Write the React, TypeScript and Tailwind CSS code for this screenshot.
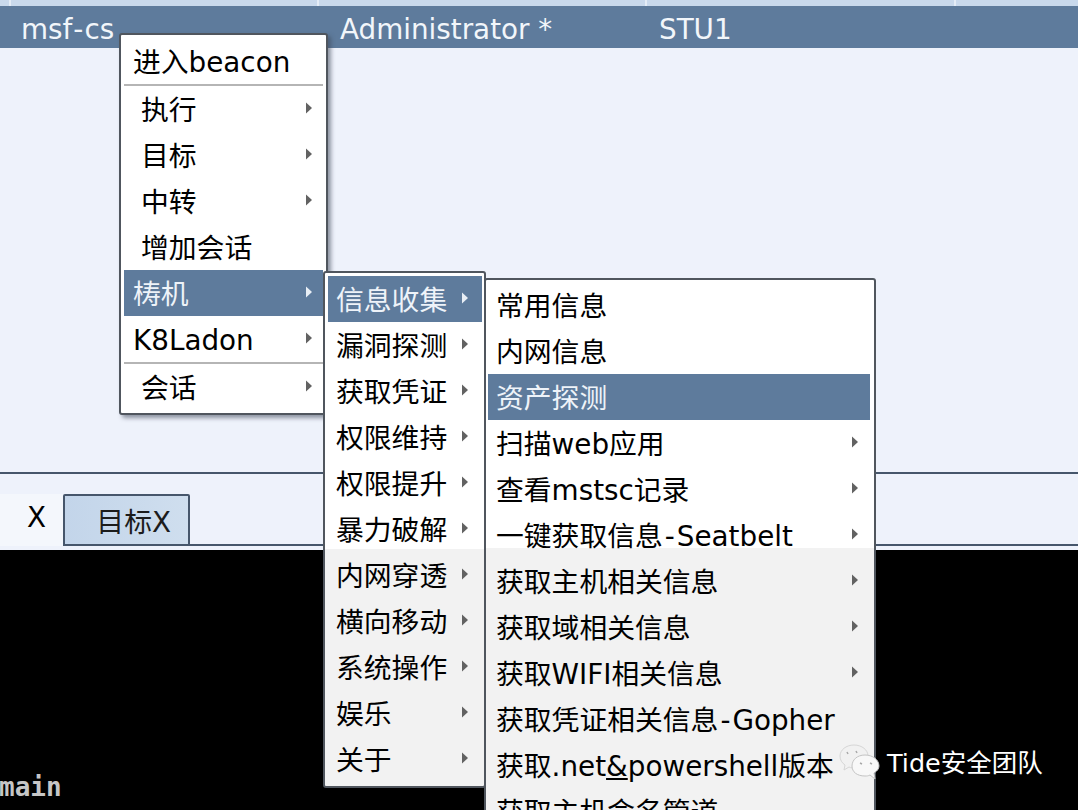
import React from 'react';

type Item = { label: React.ReactNode; arrow?: boolean; active?: boolean; indent?: boolean; sep?: boolean };

const Dash = () => <span className="px-[2px]">-</span>;

const firstMenu: Item[] = [
  { label: '进入beacon', sep: true },
  { label: '执行', arrow: true, indent: true },
  { label: '目标', arrow: true, indent: true },
  { label: '中转', arrow: true, indent: true },
  { label: '增加会话', indent: true },
  { label: '梼机', arrow: true, active: true },
  { label: 'K8Ladon', arrow: true, sep: true },
  { label: '会话', arrow: true, indent: true },
];

const secondMenu: Item[] = [
  { label: '信息收集', arrow: true, active: true },
  { label: '漏洞探测', arrow: true },
  { label: '获取凭证', arrow: true },
  { label: '权限维持', arrow: true },
  { label: '权限提升', arrow: true },
  { label: '暴力破解', arrow: true },
  { label: '内网穿透', arrow: true },
  { label: '横向移动', arrow: true },
  { label: '系统操作', arrow: true },
  { label: '娱乐', arrow: true },
  { label: '关于', arrow: true },
];

const thirdMenu: Item[] = [
  { label: '常用信息' },
  { label: '内网信息' },
  { label: '资产探测', active: true },
  { label: '扫描web应用', arrow: true },
  { label: '查看mstsc记录', arrow: true },
  { label: <>一键获取信息<Dash />Seatbelt</>, arrow: true },
  { label: '获取主机相关信息', arrow: true },
  { label: '获取域相关信息', arrow: true },
  { label: '获取WIFI相关信息', arrow: true },
  { label: <>获取凭证相关信息<Dash />Gopher</> },
  { label: <>获取.net<span className="underline">&amp;</span>powershell版本</> },
  { label: '获取主机命名管道' },
];

const Arrow = ({ active }: { active?: boolean }) => (
  <svg width="6" height="12" viewBox="0 0 6 12" className="mb-[6px] shrink-0">
    <path d="M0 0.5 L6 6 L0 11.5 Z" fill={active ? '#e8eef5' : '#626262'} />
  </svg>
);

const MenuRow = ({ item, pad }: { item: Item; pad: string }) => (
  <>
    <div
      className={`flex h-[46px] shrink-0 items-center justify-between whitespace-nowrap pt-[4px] ${pad} ${
        item.active ? 'bg-[#5e7b9c] text-[#eef3f9]' : 'text-black'
      }`}
    >
      <span className={item.indent ? 'pl-2' : ''}>{item.label}</span>
      {item.arrow && <Arrow active={item.active} />}
    </div>
    {item.sep && <div className="h-[2px] shrink-0 bg-[#b5b5b5]" />}
  </>
);

export default function App() {
  return (
    <div className="relative flex h-[810px] w-[1078px] flex-col overflow-hidden bg-[#eef2fb] font-['DejaVu_Sans','Noto_Sans_CJK_SC',sans-serif] text-[27.8px] leading-none">
      {/* table header, only its lower edge is visible */}
      <div className="flex h-[6px] shrink-0 bg-[#c9d9ec]">
        <div className="w-[11px] border-r-2 border-[#e4ecf6]" />
        <div className="w-[308px] border-r-2 border-[#e4ecf6]" />
        <div className="w-[328px] border-r-2 border-[#e4ecf6]" />
        <div className="w-[309px] border-r-2 border-[#e4ecf6]" />
      </div>

      {/* selected row */}
      <div className="flex h-[42px] shrink-0 items-center bg-[#5e7b9c] pt-[6px] text-[#f2f6fa]">
        <div className="w-[340px] pl-[21px]">
          msf<span className="px-[1px]">-</span>cs
        </div>
        <div className="w-[319px]">Administrator *</div>
        <div>STU1</div>
      </div>

      <div className="h-[426px] shrink-0 border-b-2 border-[#46566b]" />

      {/* tabs */}
      <div className="flex h-[72px] shrink-0 items-end border-b-2 border-[#46566b]">
        <div className="-mb-[2px] flex h-[52px] w-[63px] items-center justify-end bg-[#f4f7fc] pr-[17px] pb-[5px] text-black">X</div>
        <div className="-mb-[2px] flex h-[52px] w-[127px] items-center justify-end rounded-t-[2px] border-2 border-[#46566b] bg-gradient-to-r from-[#c3d5ea] to-[#cfdeee] pr-[17px] pt-[5px] text-[#1c1c1c]">目标X</div>
      </div>
      <div className="h-[4px] shrink-0" />

      {/* console */}
      <div className="flex flex-1 items-end bg-black pb-[10px]">
        <span className="-ml-[1px] font-['DejaVu_Sans_Mono',monospace] text-[26px] font-bold text-[#c6c6c6]">main</span>
      </div>

      {/* context menus */}
      <div className="absolute left-[119px] top-[33px] flex h-[382px] w-[209px] flex-col rounded-[3px] border-2 border-[#50565e] bg-white px-[3px] pt-[3px] shadow-[3px_3px_4px_rgba(60,70,85,0.55)]">
        {firstMenu.map((item, i) => (
          <MenuRow key={i} item={item} pad="pl-[9px] pr-[11px]" />
        ))}
      </div>

      <div className="absolute left-[484px] top-[278px] flex h-[560px] w-[392px] flex-col rounded-[3px] border-2 border-[#50565e] bg-[linear-gradient(#fff_268px,#f2f2f2_268px)] pl-[2px] pr-[4px] pt-[2px]">
        {thirdMenu.map((item, i) => (
          <MenuRow key={i} item={item} pad="pl-[8px] pr-[12px]" />
        ))}
      </div>

      <div className="absolute left-[323px] top-[271px] flex h-[517px] w-[163px] flex-col rounded-[3px] border-2 border-[#50565e] bg-[linear-gradient(#fff_276px,#f2f2f2_276px)] pl-[3px] pr-[2px] pt-[3px]">
        {secondMenu.map((item, i) => (
          <MenuRow key={i} item={item} pad="pl-[8px] pr-[14px]" />
        ))}
      </div>

      {/* watermark */}
      <div className="absolute left-[839px] top-[744px] flex items-center gap-[7px] text-white">
        <svg width="41" height="36" viewBox="0 0 41 36">
          <path d="M15 1 C7 1 1 6 1 12 C1 16 3 19 6 21 L5 26 L10 23 C12 24 14 24 16 24 C24 24 29 18 29 12 C29 6 23 1 15 1 Z" fill="#f1f1f1" stroke="#d6d6d6" />
          <path d="M26 11 C18 11 13 16 13 22 C13 28 18 32 26 32 C28 32 29 32 31 31 L36 35 L35 29 C38 27 40 25 40 22 C40 16 34 11 26 11 Z" fill="#f8f8f8" stroke="#c4c4c4" />
          <path d="M8 8 L9 10 M17 7 L18 9 M21 19 L23 20 M31 19 L33 20" stroke="#a8a8a8" strokeWidth="1.5" />
        </svg>
        <span className="pt-[3px] text-[25.5px]">Tide安全团队</span>
      </div>
    </div>
  );
}
